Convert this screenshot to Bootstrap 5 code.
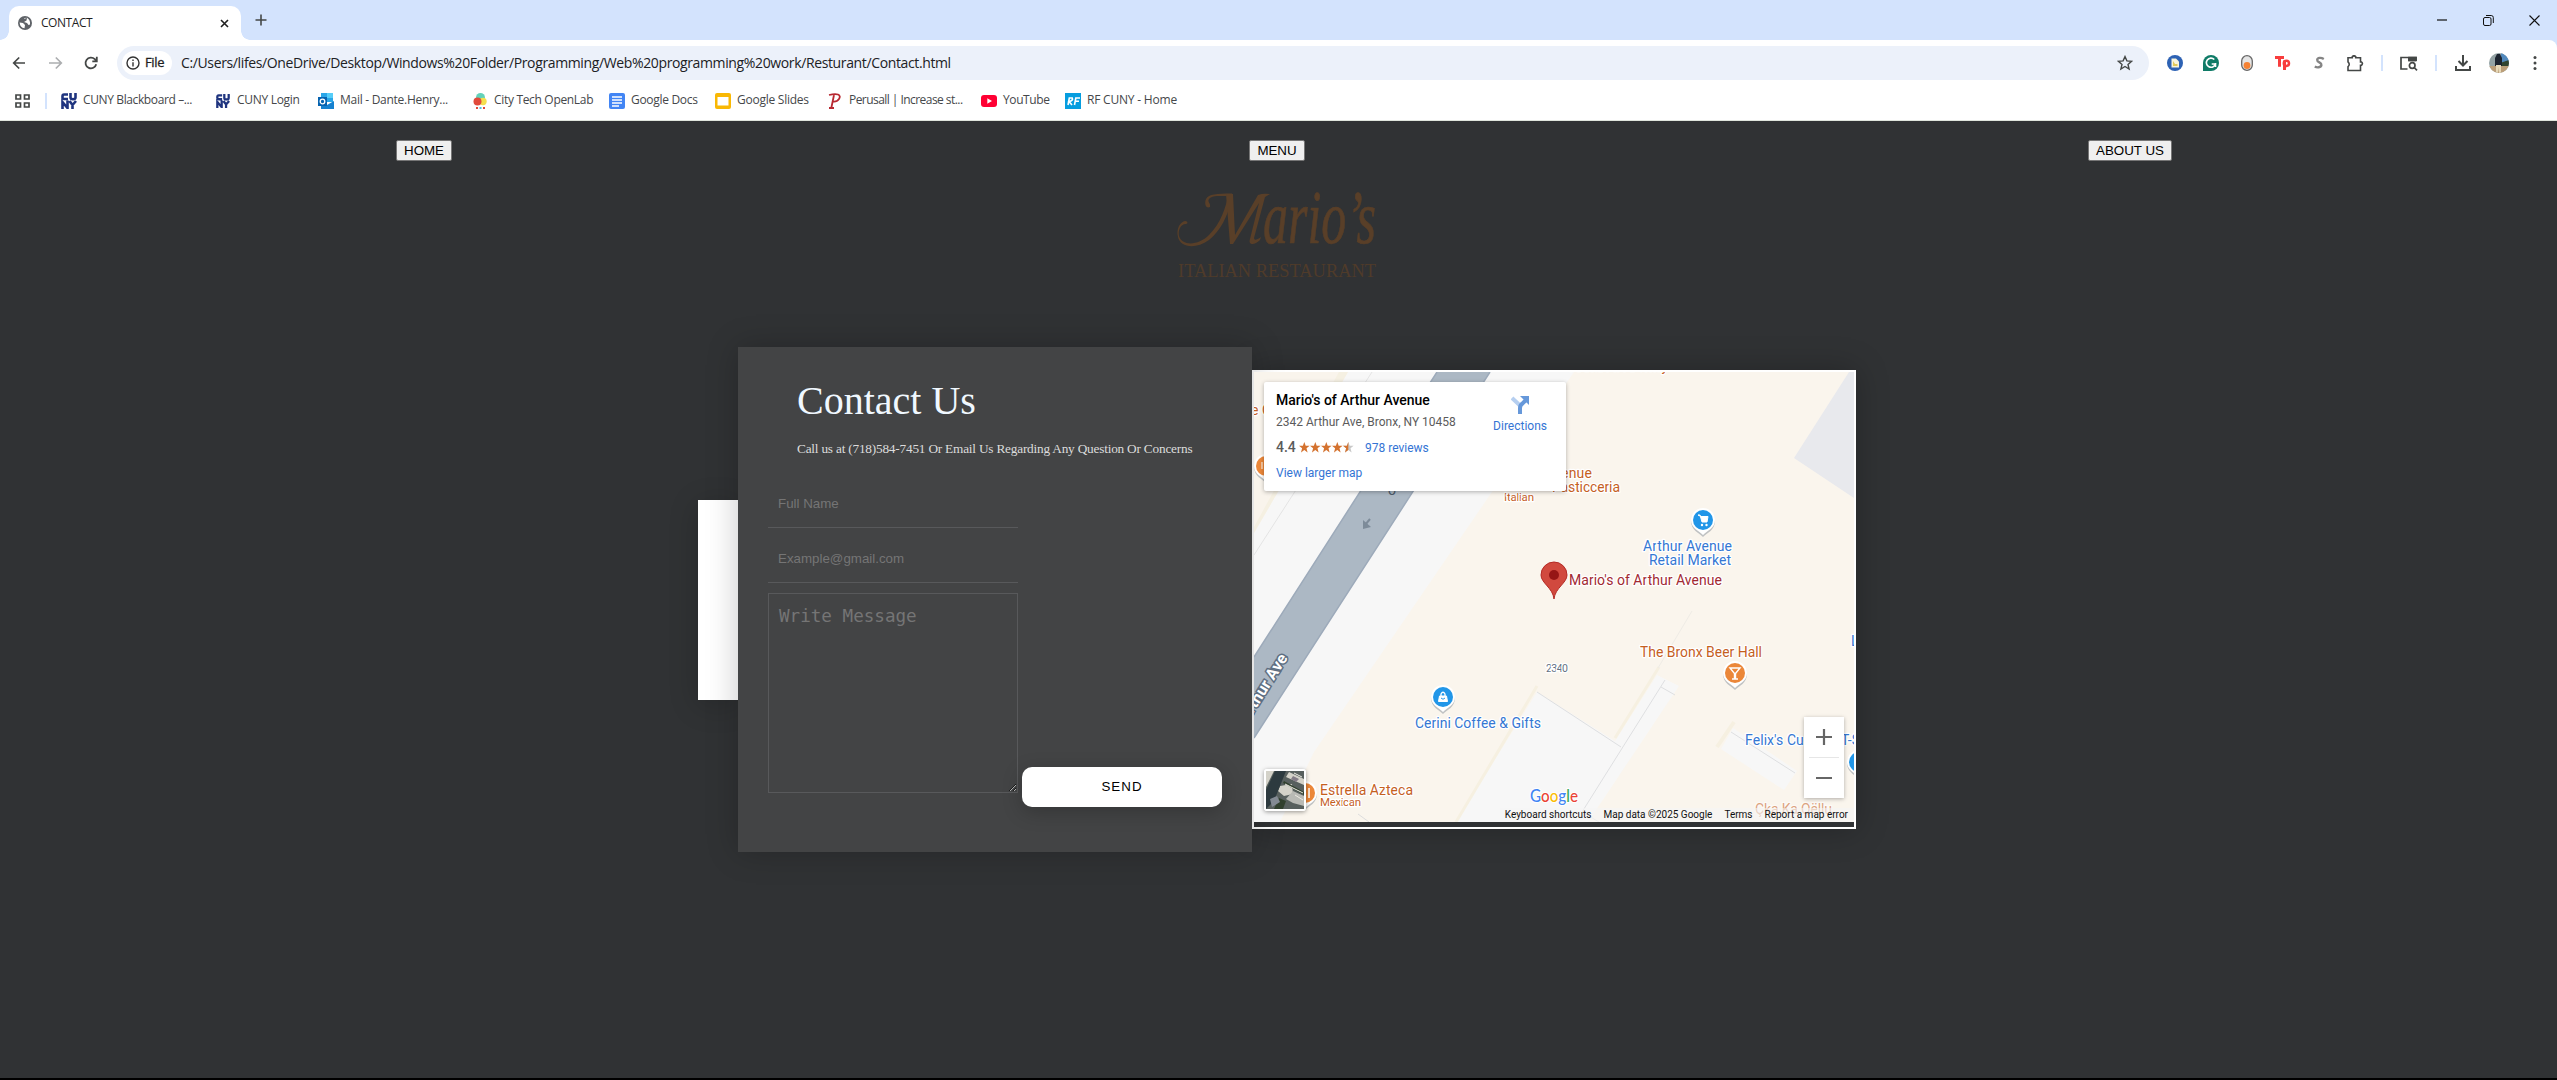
<!DOCTYPE html>
<html lang="en">
<head>
<meta charset="utf-8">
<title>CONTACT</title>
<meta name="viewport" content="width=device-width, initial-scale=1">
<link href="https://cdn.jsdelivr.net/npm/bootstrap@5.3.0/dist/css/bootstrap.min.css" rel="stylesheet">
<style>
html,body{height:100%;margin:0}
body{width:2557px;height:1080px;overflow:hidden;background:#303234;font-family:"Open Sans","Noto Sans",sans-serif;line-height:1.2;border-bottom:2px solid #000}
svg{display:block;flex:none}
.tabstrip{height:40px;background:#d3e3fd;padding-left:9px}
.tab-on{position:relative;width:232px;height:34px;background:#fff;border-radius:10px 10px 0 0;padding:0 12px 0 9px;margin-top:6px}
.tab-on::before,.tab-on::after{content:"";position:absolute;bottom:0;width:9px;height:9px}
.tab-on::before{left:-9px;background:radial-gradient(circle at 0 0,#d3e3fd 8.5px,#fff 9px)}
.tab-on::after{right:-9px;background:radial-gradient(circle at 100% 0,#d3e3fd 8.5px,#fff 9px)}
.tab-title{font-size:12px;color:#1f1f1f;margin-left:9px;letter-spacing:-.45px}
.newtab{margin:6px 0 0 14px}
.winctl{gap:35px;padding-right:17px}
.toolrow{height:46px;background:#d3e3fd}
.toolin{height:46px;background:#fff;border-top-right-radius:8px;padding:0 20px 0 12px}
.omni{width:2032px;height:34px;border-radius:17px;background:#ecf1fa;margin-left:20px;padding:0 16px 0 5px}
.chip{height:24px;width:50px;border-radius:12px;background:#fff;font-size:13px;color:#1f1f1f;padding-left:4px;gap:5px;-webkit-text-stroke:.3px #1f1f1f;letter-spacing:-.35px}
.urltext{font-size:14px;color:#202124;margin-left:9px;letter-spacing:-.37px;white-space:nowrap}
.vsep{width:2px;height:16px;background:#d3e3fd}
.marks{height:35px;background:#fff;border-bottom:1px solid #dfe5dc;padding:0 0 5px 15px;font-size:12px;color:#45474a}
.mk{gap:6px;height:20px;white-space:nowrap}
.sitebtn{font-family:"Liberation Sans",Arial,sans-serif;font-size:13.33px;line-height:15px;height:21px;border:1.5px solid #767676;border-radius:2px;background:#efefef;color:#000;padding:1px 6px;text-align:center}
.topnav{height:60px;padding-top:19px}
.brandart{margin:8px auto 0;overflow:visible}
.hero{margin-top:66px;padding-left:698px}
.whitebox{width:40px;height:200px;background:#fff;box-shadow:0 5px 30px rgba(0,0,0,.2)}
.formbox{width:514px;height:505px;background:#434445;box-shadow:0 0 30px rgba(0,0,0,.22);padding:30px;position:relative}
.formbox h1{font-family:"Liberation Serif",serif;font-size:40px;line-height:46px;font-weight:400;color:#f0f8ff;margin:1px 0 0 29px}
.formbox .sub{font-family:"Liberation Serif",serif;font-size:13.3px;line-height:16px;color:#dcdcdc;margin:17px 0 0 29px;white-space:nowrap;letter-spacing:-.21px}
.fld{display:block;width:250px;height:40px;border:0;border-bottom:1px solid #58595b;background:transparent;padding:0 10px 8px;font-family:"Liberation Sans",Arial,sans-serif;font-size:13.33px}
.fld::placeholder,.msg::placeholder{color:#757575;opacity:1}
.msg{display:block;width:250px;height:200px;border:1px solid #58595b;background:transparent;padding:11px 10px;font-family:"DejaVu Sans Mono","Liberation Mono",monospace;font-size:17.6px;line-height:22px;resize:both;margin:0}
.sendbtn{width:200px;height:40px;border:0;border-radius:10px;background:#fff;color:#000;font-family:"Liberation Sans",Arial,sans-serif;font-size:13.33px;letter-spacing:1px;margin:0 0 -14px 4px;box-shadow:0 5px 20px rgba(0,0,0,.22)}
.mapbox{width:604px;height:459px;border:2px solid #fff;box-shadow:0 0 30px rgba(0,0,0,.25)}
.mapview{position:relative;width:600px;height:450px;overflow:hidden;background:#f7f7f7;font-family:Roboto,sans-serif}
.infocard{position:absolute;left:10px;top:10px;width:302px;height:109px;background:#fff;border-radius:2px;box-shadow:0 1px 4px rgba(0,0,0,.3);padding:10px 12px 0;font-size:12px;color:#5b5b5b}
.infocard .nm{font-size:14px;font-weight:500;color:#000;line-height:16px}
.infocard .lk{color:#3474d4}
.zoomer{position:absolute;left:550px;top:345px;width:40px;height:81px;background:#fff;box-shadow:0 1px 4px rgba(0,0,0,.3)}
.sat{position:absolute;left:10px;top:397px;width:42px;height:42px;border:2px solid #fff;border-radius:3px;box-shadow:0 1px 4px rgba(0,0,0,.4)}
.credits{position:absolute;right:0;bottom:0;height:14px;font-size:10px;color:#111;background:rgba(245,245,245,.6);padding:0 6px 0 5px;gap:12px;white-space:nowrap}
</style>
</head>
<body>
<header>
 <div class="tabstrip d-flex align-items-start">
  <div class="tab-on d-flex align-items-center">
   <svg width="14" height="14" viewBox="0 0 14 14"><circle cx="7" cy="7" r="7" fill="#5f6368"/><path d="M1.600 6.500 5 7 7 9 6.500 12.300Q2 11.500 1.600 6.500ZM6.500 2 9 1.800 8.500 4.500 6 6 9 7 10.500 9 12 8.500Q12.500 4 9 1.800L6 3Z" fill="#fff"/></svg>
   <span class="tab-title">CONTACT</span>
   <svg class="ms-auto" width="9" height="9" viewBox="0 0 9 9"><path d="M1 1 8 8M8 1 1 8" stroke="#1f1f1f" stroke-width="1.6"/></svg>
  </div>
  <svg class="newtab" width="12" height="28" viewBox="0 0 12 28"><path d="M6 8.5V19.5M.5 14H11.5" stroke="#444746" stroke-width="1.6"/></svg>
  <div class="winctl d-flex align-items-center ms-auto h-100">
   <svg width="11" height="11"><path d="M0 5H10" stroke="#111" stroke-width="1.2"/></svg>
   <svg width="11" height="11" fill="none" stroke="#111"><rect x=".5" y="2.5" width="7.5" height="8" rx="1.5"/><path d="M3 .5H8.2Q10.3 .5 10.3 2.5V8"/></svg>
   <svg width="11" height="11"><path d="M.5 .5 10.5 10.5M10.5 .5 .5 10.5" stroke="#111" stroke-width="1.1"/></svg>
  </div>
 </div>
 <div class="toolrow">
  <div class="toolin d-flex align-items-center">
   <svg width="14" height="14" fill="none" stroke="#444746" stroke-width="1.7"><path d="M13 7H2M7.2 1.5 1.7 7 7.2 12.5"/></svg>
   <svg style="margin-left:23px" width="14" height="14" fill="none" stroke="#acaeb0" stroke-width="1.7"><path d="M0 7H12M6.8 1.5 12.3 7 6.8 12.5"/></svg>
   <svg style="margin-left:21px;margin-right:-1px" width="14" height="14" fill="none" stroke="#444746" stroke-width="1.8"><path d="M12.2 8.2A5.4 5.4 0 1 1 10.8 3.2L12.6 5M12.8 .8V5.3H8.3"/></svg>
   <div class="omni d-flex align-items-center">
    <div class="chip d-flex align-items-center"><svg width="14" height="14" fill="none" stroke="#333" stroke-width="1.4"><circle cx="7" cy="7" r="6"/><path d="M7 6.3V10.5M7 3.6V5"/></svg>File</div>
    <span class="urltext">C:/Users/lifes/OneDrive/Desktop/Windows%20Folder/Programming/Web%20programming%20work/Resturant/Contact.html</span>
    <svg class="ms-auto" width="16" height="16" fill="none" stroke="#444746" stroke-width="1.4"><path d="M8 1.6 9.9 5.9 14.6 6.3 11 9.4 12.1 14 8 11.5 3.9 14 5 9.4 1.4 6.3 6.1 5.9Z"/></svg>
   </div>
   <svg style="margin-left:18px" width="16" height="16"><circle cx="8" cy="8" r="8" fill="#2d62b4"/><path d="M4.500 3.500H9L12 6.500V12.500H4.500Z" fill="#f7f4dc"/><path d="M6 6 8 9H10.500V11H6Z" fill="#e0c95a"/></svg>
   <svg style="margin-left:20px" width="16" height="16"><path d="M8 0A8 8 0 1 1 8 16H0V8A8 8 0 0 1 8 0Z" fill="#0f7b67"/><path d="M11.3 4.500A4.600 4.600 0 1 0 12.400 9H8.700M12.500 8V12" fill="none" stroke="#fff" stroke-width="1.6"/></svg>
   <svg style="margin-left:22px" width="12" height="16"><rect x=".7" y=".7" width="10.6" height="14.6" rx="5.3" fill="#e5e5e5" stroke="#666" stroke-width="1.3"/><circle cx="6" cy="10.5" r="3.4" fill="#f58233"/></svg>
   <svg style="margin-left:22px" width="16" height="16" fill="none" stroke="#f83d3d" stroke-width="3"><path d="M0 2.5H9M4.5 2V11.8M9.5 15V5.5"/><circle cx="11.4" cy="8.3" r="2.6" stroke-width="2.5"/></svg>
   <svg style="margin-left:23px" width="11" height="14" fill="none" stroke="#858585" stroke-width="2.4"><path d="M9.800 3C7 1.300 3.500 1.500 3.200 3.900 3 6.700 7.800 6.200 7.400 9 7 11.600 3 11.900 .8 10.500"/></svg>
   <svg style="margin-left:22px" width="17" height="17" fill="none" stroke="#444746" stroke-width="1.6"><path d="M1 2.7H5.3V1.6Q7 0 8.7 1.6V2.7H13.5V7H14.6Q16.2 8.5 14.6 10.3H13.5V15.5H1V11.7Q3.5 9.2 1 6.8Z"/></svg>
   <div class="vsep" style="margin-left:17px"></div>
   <svg style="margin-left:17px" width="18" height="15" fill="none" stroke="#444746" stroke-width="1.7"><path d="M7.5 13H1V1.5H16V5M9 1V4.5H16"/><path d="M9 1.5H16V4.5H9Z" fill="#444746"/><circle cx="12.2" cy="9.5" r="2.8"/><path d="M14.2 11.5 17 14.3"/></svg>
   <div class="vsep" style="margin-left:17px"></div>
   <svg style="margin-left:18px" width="16" height="16" fill="none" stroke="#444746" stroke-width="2"><path d="M8 0V10M3.5 6 8 10.5 12.5 6M1 11V15H15V11"/></svg>
   <svg style="margin-left:18px" width="20" height="20"><clipPath id="av"><circle cx="10" cy="10" r="10"/></clipPath><g clip-path="url(#av)"><path d="M0 0H20V20H0Z" fill="#94a3a5"/><path d="M12 0H20V9H12Z" fill="#5289bd"/><path d="M11 10 20 7V13H11Z" fill="#31442f"/><path d="M0 13H20V20H0Z" fill="#bc9f79"/><path d="M6 13V5L8 1H11L13 5V13Z" fill="#1d2530"/><path d="M7 12H12V20H10L9.5 14 9 20H7Z" fill="#e6d8b8"/></g></svg>
   <svg class="ms-auto" width="4" height="16" fill="#444746"><circle cx="2" cy="2.5" r="1.5"/><circle cx="2" cy="8" r="1.5"/><circle cx="2" cy="13.5" r="1.5"/></svg>
  </div>
 </div>
 <nav class="marks d-flex align-items-center">
  <svg width="15" height="14" fill="none" stroke="#444746" stroke-width="1.7"><path d="M1 1H5.5V5H1ZM9.5 1H14V5H9.5ZM1 9H5.5V13H1ZM9.5 9H14V13H9.5Z"/></svg>
  <div class="vsep" style="margin-left:15px"></div>
  <div class="mk d-flex align-items-center" style="margin-left:14px;width:155px"><svg width="16" height="16" viewBox="0 0 16 16" fill="none" stroke="#1f347f" stroke-width="2.6"><path d="M7 1.500H3Q1.500 1.500 1.500 3.500V4.500Q1.500 6 3 6H7M9.500 0V4.500Q9.500 6.200 12 6.200 14.500 6.200 14.500 4.500V0M1.500 16V9L6.500 15V7.500M8.500 8 11.500 12 15 8M11.500 11V16"/></svg><span style="letter-spacing:-.38px">CUNY Blackboard –...</span></div>
  <div class="mk d-flex align-items-center" style="width:102px"><svg width="14" height="14" viewBox="0 0 16 16" fill="none" stroke="#1f347f" stroke-width="2.6"><path d="M7 1.500H3Q1.500 1.500 1.500 3.500V4.500Q1.500 6 3 6H7M9.500 0V4.500Q9.500 6.200 12 6.200 14.500 6.200 14.500 4.500V0M1.500 16V9L6.500 15V7.500M8.500 8 11.500 12 15 8M11.500 11V16"/></svg><span style="letter-spacing:-.3px;margin-left:1px">CUNY Login</span></div>
  <div class="mk d-flex align-items-center" style="width:154px"><svg width="16" height="16"><path d="M3 0H15V9H3Z" fill="#2aa6e8"/><path d="M9 0H15V5H9Z" fill="#56cdf8"/><path d="M3 9 9 12 16 8V16H3Z" fill="#1581cf"/><path d="M0 4H9V13H0Z" fill="#0663b0"/><circle cx="4.5" cy="8.5" r="2.3" fill="none" stroke="#fff" stroke-width="1.3"/></svg><span style="letter-spacing:-.28px">Mail - Dante.Henry...</span></div>
  <div class="mk d-flex align-items-center" style="width:137px"><svg width="16" height="16"><circle cx="8.5" cy="4.5" r="4.5" fill="#62d2ba"/><circle cx="11" cy="8.5" r="3.7" fill="#f4df4f"/><circle cx="5.5" cy="8.5" r="4" fill="#e24a3b"/><path d="M4 14H6V16H4ZM11 14H13V16H11Z" fill="#e24a3b"/><path d="M7.5 14H9.5V16H7.5Z" fill="#4ec3dd"/></svg><span style="letter-spacing:-.32px">City Tech OpenLab</span></div>
  <div class="mk d-flex align-items-center" style="width:106px"><svg width="16" height="16"><rect width="16" height="16" rx="2" fill="#4285f4"/><path d="M3 4H13M3 7H13M3 10H13M3 13H10" stroke="#fff" stroke-width="1.5"/></svg><span style="letter-spacing:-.3px">Google Docs</span></div>
  <div class="mk d-flex align-items-center" style="width:112px"><svg width="16" height="16"><rect width="16" height="16" rx="2" fill="#f9b804"/><path d="M2.500 4H13.500V12.500H2.500Z" fill="#fff"/></svg><span style="letter-spacing:-.25px">Google Slides</span></div>
  <div class="mk d-flex align-items-center" style="width:154px"><svg width="16" height="16" fill="none" stroke="#b82831" stroke-width="1.8"><path d="M2 2Q8 .5 11 1.500 14 3 12 6 10 9 6 8.500M7 2 4.300 15M2 15H7"/></svg><span style="letter-spacing:-.55px">Perusall | Increase st...</span></div>
  <div class="mk d-flex align-items-center" style="width:84px"><svg width="16" height="16"><rect y="2" width="16" height="12" rx="3" fill="#ff0033"/><path d="M6.3 5.2V10.8L11 8Z" fill="#fff"/></svg><span style="letter-spacing:-.4px">YouTube</span></div>
  <div class="mk d-flex align-items-center"><svg width="16" height="16"><path d="M0 0H16V16H0Z" fill="#069ddf"/><path d="M3 12 4.3 5H7.3Q8.5 7.5 4 8.5L7 12M9.5 12 10.8 5H15M10 8.3H14" fill="none" stroke="#fff" stroke-width="1.6"/></svg><span style="letter-spacing:-.2px">RF CUNY - Home</span></div>
 </nav>
</header>
<main>
 <div class="topnav d-flex">
  <div style="width:396px"></div><button class="sitebtn" style="width:56px">HOME</button>
  <button class="sitebtn" style="width:56px;margin-left:797px">MENU</button>
  <button class="sitebtn" style="width:84px;margin-left:783px">ABOUT US</button>
 </div>
 <svg class="brandart" width="204" height="92" viewBox="0 0 204 92" fill="#593f28">
  <path d="M9 35C3 35 1 42 2 47 5 57 21 57 32 46 44 34 49 18 51 6L55 6 55 8C51 28 43 42 32 51 18 61 3 58 1 48-1 40 3 32 9 32Q12 34 9 35ZM33 18C29 20 27 15 29 10 32 5 39 4.500 55 4.500V7C42 7 35 6 32 10 30 13 34 14 33 18Z"/>
  <path d="M49 5H56L58 46 81 6Q86 4 93 5L88 8 77 49Q77 53 84 48L83 51C77 57 71 56 73 50L82 14 56 55H53Z"/>
  <text x="86" y="54" font-family="Liberation Serif,serif" font-style="italic" font-size="76" textLength="113" lengthAdjust="spacingAndGlyphs" stroke="#593f28" stroke-width=".7">ario’s</text>
  <text x="1" y="88" font-family="Liberation Serif,serif" font-size="19.500" textLength="198" lengthAdjust="spacingAndGlyphs" fill="#4f3b2a">ITALIAN RESTAURANT</text>
 </svg>
 <section class="hero d-flex align-items-center">
  <div class="whitebox"></div>
  <form class="formbox">
   <h1>Contact Us</h1>
   <p class="sub">Call us at (718)584-7451 Or Email Us Regarding Any Question Or Concerns</p>
   <input class="fld" style="margin-top:31px" placeholder="Full Name">
   <input class="fld" style="margin-top:15px" placeholder="Example@gmail.com">
   <div class="d-flex align-items-end" style="margin-top:10px">
    <textarea class="msg" placeholder="Write Message"></textarea>
    <button type="button" class="sendbtn">SEND</button>
   </div>
  </form>
  <div class="mapbox">
   <div class="mapview">
    <svg width="600" height="450" viewBox="0 0 600 450" font-family="Roboto,sans-serif" font-size="14">
     <defs>
      <g id="pin"><path d="M0 16C-4 12-12 9-12 0A12 12 0 0 1 12 0C12 9 4 12 0 16Z" fill="#9aa0a6" opacity=".6" transform="translate(0 1)"/><path d="M0 15C-4 11-12 8-12 0A12 12 0 0 1 12 0C12 8 4 11 0 15Z" fill="#fff"/></g>
     </defs>
     <path d="M0 0H94L0 161Z" fill="#f9f4ec"/><path d="M85 0H94L0 161V155Z" fill="#f5f0e2"/>
     <path d="M118 0 0 183" stroke="#e4e4e4" fill="none"/>
     <path d="M320 0H600V450H26L60 380Z" fill="#faf5ed"/>
     <path d="M183 0H236L0 366V285Z" fill="#acb8c4"/><path d="M183 0 0 285M236 0 0 366" stroke="#9daaba" stroke-width="1.500"/>
     <path d="M283 320 361 369 403 303 425 314 334 450H202Z" fill="#f7f7f7"/>
     <path d="M283 314 202 450M361 366 405 295" stroke="#f6f0e1" stroke-width="3"/>
     <path d="M283 320 367 375M411 308 328 440 345 450M407 315 421 323" fill="none" stroke="#dedfe1"/>
     <path d="M438 239 404 296" stroke="#efece6"/>
     <path d="M479 356 543 399 530 418 467 377Z" fill="#f7f7f7"/><path d="M477 360 541 401" stroke="#dedfe1"/><path d="M480 350 463 375" stroke="#f6f0e1" stroke-width="4"/>
     <path d="M600 0H595L540 86 600 126Z" fill="#e8e9ed"/>
     <path d="M104 442 115 450" stroke="#ddd"/>
     <path d="M116 147 111 153" stroke="#7d8b99" stroke-width="2" fill="none"/><path d="M109 148V157L117 155Z" fill="#7d8b99"/>
     <text transform="translate(34 286) rotate(-58)" text-anchor="end" font-size="16" font-weight="700" fill="#fff" stroke="#5e6e81" stroke-width="3" paint-order="stroke">Arthur Ave</text>
     <text x="134" y="123" fill="#4e5c6b">o</text>
     <g paint-order="stroke" stroke="#fff" stroke-width="2.500" stroke-linejoin="round">
      <g fill="#c5601f">
       <text x="-3" y="43">e C</text>
       <text x="291" y="106" textLength="47">Avenue</text><text x="298" y="120" textLength="68">Pasticceria</text><text x="250" y="129" font-size="11.500" textLength="30">Italian</text>
       <text x="316" y="-1" textLength="98">Arthur Ave Bakery</text>
       <text x="386" y="285" textLength="122">The Bronx Beer Hall</text>
       <text x="66" y="423" textLength="93">Estrella Azteca</text><text x="66" y="434" font-size="11.500" textLength="41">Mexican</text>
       <g opacity=".55"><text x="501" y="442" textLength="77">Çka Ka Qëllu</text></g>
      </g>
      <g fill="#3577d3">
       <text x="389" y="179" textLength="89">Arthur Avenue</text><text x="395" y="193" textLength="82">Retail Market</text>
       <text x="161" y="356" textLength="126">Cerini Coffee &amp; Gifts</text>
       <text x="491" y="373" textLength="91">Felix's Custom</text><text x="587" y="373">T-Shirts</text><text x="597" y="274">L</text>
      </g>
      <text x="315" y="213" fill="#a22932" textLength="153">Mario's of Arthur Avenue</text>
      <text x="292" y="300" font-size="10.500" fill="#637083" textLength="22">2340</text>
     </g>
     <use href="#pin" x="12" y="94"/><circle cx="12" cy="94" r="10" fill="#eb8739"/><path d="M8 90V97M11 90V97" stroke="#fff"/>
     <use href="#pin" x="449" y="148"/><circle cx="449" cy="148" r="10" fill="#2196e8"/><path d="M444 143H446L448 150H453L454 144.500H447Z" fill="#fff" stroke="#fff"/><circle cx="448" cy="153" r="1.200" fill="#fff"/><circle cx="452.500" cy="153" r="1.200" fill="#fff"/>
     <use href="#pin" x="189" y="325"/><circle cx="189" cy="325" r="10" fill="#2196e8"/><path d="M185.500 324H192.500L193.500 329.500H184.500Z" fill="#fff" stroke="#fff"/><path d="M187 324V322Q189 318.500 191 322V324" fill="none" stroke="#fff" stroke-width="1.300"/><path d="M187 326Q189 328.500 191 326" stroke="#2196e8" fill="none"/>
     <use href="#pin" x="481" y="301"/><circle cx="481" cy="301" r="10" fill="#eb8739"/><path d="M476 296H486L481.500 301.500V307H480.500V301.500ZM478 307H484" fill="none" stroke="#fff" stroke-width="1.400"/>
     <use href="#pin" x="51" y="421"/><circle cx="51" cy="421" r="10" fill="#eb8739"/><path d="M55 416V426" stroke="#fff" stroke-width="1.500"/>
     <use href="#pin" x="605" y="390"/><circle cx="605" cy="390" r="10" fill="#2196e8"/>
     <path d="M300 227C299 216 287 211 287 203A13 13 0 0 1 313 203C313 211 301 216 300 227Z" fill="#d1493e" stroke="#b42a25"/><circle cx="300" cy="203" r="5" fill="#961615"/>
     <text x="276" y="430" font-family="Lato,sans-serif" font-size="16.500" font-weight="500" textLength="48" lengthAdjust="spacingAndGlyphs" paint-order="stroke" stroke="#fff" stroke-width="2"><tspan fill="#4285f4">G</tspan><tspan fill="#ea4335">o</tspan><tspan fill="#fbbc05">o</tspan><tspan fill="#4285f4">g</tspan><tspan fill="#34a853">l</tspan><tspan fill="#ea4335">e</tspan></text>
    </svg>
    <div class="infocard d-flex justify-content-between">
     <div>
      <div class="nm">Mario's of Arthur Avenue</div>
      <div style="margin-top:7px">2342 Arthur Ave, Bronx, NY 10458</div>
      <div class="d-flex align-items-center" style="margin-top:10px"><span style="font-size:14px;font-weight:500;width:23px">4.4</span>
       <svg width="55" height="11" viewBox="0 0 55 11"><defs><path id="st" d="M5.300 0 6.700 3.800H10.600L7.500 6.200 8.600 10.400 5.300 8 2 10.400 3.100 6.200 0 3.800H3.900Z"/></defs><g fill="#d4722f"><use href="#st"/><use href="#st" x="11"/><use href="#st" x="22"/><use href="#st" x="33"/></g><use href="#st" x="44" fill="#c8c8c8"/><path d="M49.300 0V8L46 10.400 47.100 6.200 44 3.800H47.900Z" fill="#d4722f"/></svg>
       <span class="lk" style="margin-left:11px">978 reviews</span></div>
      <div class="lk" style="margin-top:10px">View larger map</div>
     </div>
     <div class="d-flex flex-column align-items-center lk" style="margin-right:7px;padding-top:4px">
      <svg width="19" height="19" fill="none" stroke-width="4"><path d="M1 2 9 9.500" stroke="#b6cff0"/><path d="M9 18V12Q9 9 12 7L15 4" stroke="#6698da"/><path d="M9 0H18V9Z" fill="#6698da"/></svg>
      <span style="margin-top:4px">Directions</span></div>
    </div>
    <div class="sat"><svg width="38" height="38"><path d="M0 0H38V38H0Z" fill="#58605e"/><path d="M0 0H8L0 16ZM23 1 38 8V14L20 6ZM14 15 26 13 27 23 18 25 12 20Z" fill="#d4d2c9"/><path d="M9 0H20L8 30 0 38V19Z" fill="#2d3a3f"/><path d="M20 28 27 20 38 25V35L27 32Z" fill="#b9bab5"/><path d="M18 10 38 21V24L17 12ZM13 27 20 30 17 38H8Z" fill="#31402e"/><path d="M4 28 11 25 14 31 6 36Z" fill="#838a93"/><path d="M27 5 33 8 30 11 25 8Z" fill="#837b86"/><path d="M19 13 37 22M28 2 36 6M29 24 37 29" stroke="#eceae2"/></svg></div>
    <div class="zoomer"><svg width="40" height="81"><path d="M20 12V28M12 20H28M12 61H28" stroke="#666" stroke-width="2.200"/><path d="M5 40.500H35" stroke="#e6e6e6"/></svg></div>
    <div class="credits d-flex align-items-center"><span>Keyboard shortcuts</span><span>Map data ©2025 Google</span><span>Terms</span><span>Report a map error</span></div>
   </div>
  </div>
 </section>
</main>
<script src="https://cdn.jsdelivr.net/npm/bootstrap@5.3.0/dist/js/bootstrap.bundle.min.js"></script>
</body>
</html>
